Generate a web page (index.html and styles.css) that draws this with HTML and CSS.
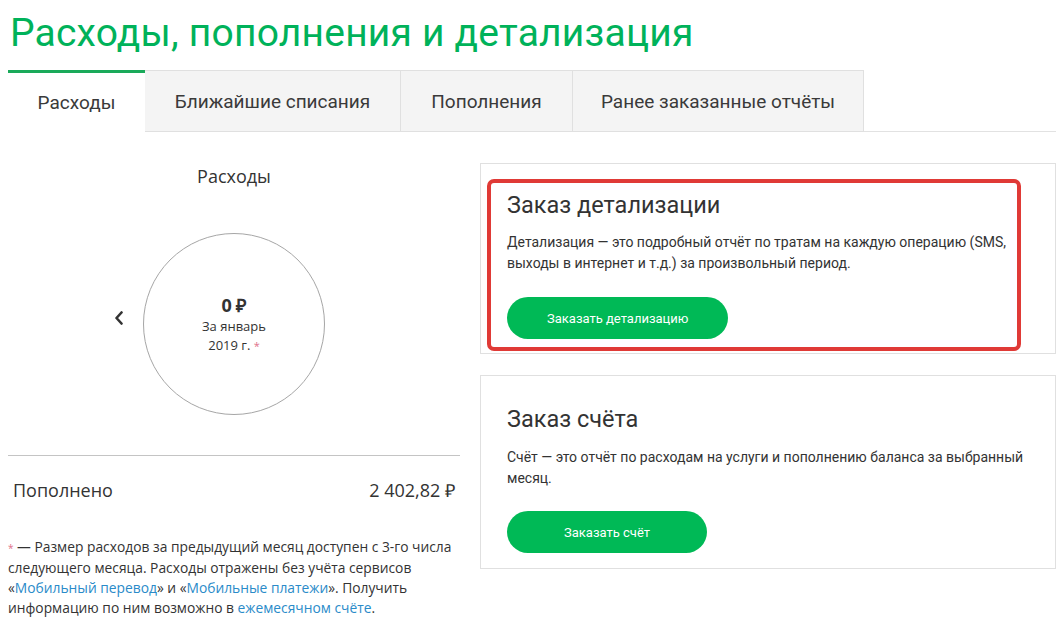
FILE: index.html
```html
<!DOCTYPE html>
<html lang="ru">
<head>
<meta charset="utf-8">
<title>Расходы, пополнения и детализация</title>
<link rel="stylesheet" href="styles.css">
</head>
<body>
<div class="page">
  <h1 class="title">Расходы, пополнения и детализация</h1>
  <div class="tabs">
    <div class="tab tab-active">Расходы</div>
    <div class="tab">Ближайшие списания</div>
    <div class="tab">Пополнения</div>
    <div class="tab">Ранее заказанные отчёты</div>
  </div>
  <div class="content">
    <div class="left">
      <div class="left-title">Расходы</div>
      <div class="chart">
        <div class="chev-cell">
          <svg class="chev" width="10" height="14" viewBox="0 0 10 14"><path d="M7.5 1.5 L2.5 7 L7.5 12.5" fill="none" stroke="#333" stroke-width="2.6" stroke-linecap="round" stroke-linejoin="round"/></svg>
        </div>
        <div class="circle">
          <div class="sum">0 ₽</div>
          <div class="period">За январь</div>
          <div class="period">2019 г. <span class="star">*</span></div>
        </div>
        <div></div>
      </div>
      <div class="sep"></div>
      <div class="paid-row">
        <span>Пополнено</span>
        <span>2 402,82 ₽</span>
      </div>
      <p class="note"><span class="star">*</span> — Размер расходов за предыдущий месяц доступен с 3-го числа следующего месяца. Расходы отражены без учёта сервисов «<a href="#">Мобильный перевод</a>» и «<a href="#">Мобильные платежи</a>». Получить информацию по ним возможно в <a href="#">ежемесячном счёте</a>.</p>
    </div>
    <div class="right">
      <div class="card">
        <h2 class="card-title">Заказ детализации</h2>
        <p class="card-text">Детализация — это подробный отчёт по тратам на каждую операцию (SMS, выходы в интернет и т.д.) за произвольный период.</p>
        <button class="btn">Заказать детализацию</button>
        <div class="highlight"></div>
      </div>
      <div class="card card-second">
        <h2 class="card-title">Заказ счёта</h2>
        <p class="card-text">Счёт — это отчёт по расходам на услуги и пополнению баланса за выбранный месяц.</p>
        <button class="btn">Заказать счёт</button>
      </div>
    </div>
  </div>
</div>
</body>
</html>
```
FILE: styles.css
```css
* { box-sizing: border-box; }
body {
  margin: 8px;
  font-family: Roboto, "Liberation Sans", sans-serif;
  color: #333;
  background: #fff;
}
.page { width: 1048px; }
.title {
  margin: 0 0 12px;
  padding-left: 2px;
  font-family: Roboto, sans-serif;
  font-weight: 400;
  font-size: 39px;
  line-height: 50px;
  color: #00b25a;
  letter-spacing: 0.2px;
}
.tabs {
  display: flex;
  border-bottom: 1px solid #e2e2e2;
  height: 62px;
}
.tab {
  height: 62px;
  display: flex;
  align-items: center;
  justify-content: center;
  padding: 0;
  background: #f4f4f4;
  border: 1px solid #e0e0e0;
  border-left: none;
  font-size: 19px;
  color: #3a3a3a;
}
.tab-active {
  background: #fff;
  border: none;
  border-top: 3px solid #1aaa5a;
  width: 137px;
  height: 62px;
}
.tab:nth-child(2) { width: 256px; }
.tab:nth-child(3) { width: 172px; }
.tab:nth-child(4) { width: 291px; }
.content {
  display: flex;
  gap: 20px;
}
.left {
  width: 452px;
  flex: none;
}
.left-title {
  margin-top: 32px;
  font-family: "Open Sans", sans-serif;
  font-size: 18px;
  line-height: 24px;
  text-align: center;
  color: #333;
}
.chart {
  margin-top: 45px;
  display: grid;
  grid-template-columns: 1fr auto 1fr;
  align-items: center;
}
.chev-cell {
  display: flex;
  justify-content: flex-end;
  padding-right: 19px;
  padding-bottom: 12px;
}
.circle {
  width: 182px;
  height: 182px;
  border: 1px solid #a6a6a6;
  border-radius: 50%;
  display: flex;
  flex-direction: column;
  align-items: center;
  justify-content: center;
  font-family: "Open Sans", sans-serif;
}
.sum {
  font-weight: 700;
  font-size: 18px;
  line-height: 24px;
  color: #333;
}
.period {
  font-size: 13px;
  line-height: 19px;
  color: #333;
}
.star { color: #e0708a; font-size: 11px; vertical-align: top; }
.sep {
  margin-top: 40px;
  height: 1px;
  background: #c4c4c4;
}
.paid-row {
  margin-top: 22px;
  display: flex;
  justify-content: space-between;
  padding: 0 5px;
  font-family: "Open Sans", sans-serif;
  font-size: 18px;
  line-height: 24px;
  color: #333;
}
.note {
  margin: 35px 0 0;
  font-family: "Open Sans", sans-serif;
  font-size: 13.8px;
  line-height: 20px;
  color: #333;
}
.note .star { font-size: 10px; vertical-align: baseline; }
.note a { color: #2a8bc9; text-decoration: none; }
.right {
  width: 576px;
  flex: none;
  padding-top: 31px;
  display: flex;
  flex-direction: column;
  gap: 20px;
}
.card {
  position: relative;
  border: 1px solid #e0e0e0;
  padding: 27px 26px 14px;
}
.card-second { margin-top: 1px; padding-top: 29px; padding-bottom: 15px; }
.card-title {
  margin: 0;
  font-weight: 400;
  font-size: 23.5px;
  line-height: 28px;
  color: #333;
}
.card-text {
  margin: 13px 0 0;
  font-size: 14px;
  line-height: 21px;
  color: #333;
}
.card-second .card-text { margin-top: 14px; line-height: 20.5px; }
.btn {
  margin-top: 23px;
  height: 42px;
  min-width: 200px;
  padding: 0 40px;
  border: none;
  border-radius: 21px;
  background: #00b956;
  color: #fff;
  font-family: Roboto, sans-serif;
  font-size: 13px;
  display: block;
}
.highlight {
  position: absolute;
  left: 6px;
  top: 15px;
  width: 534px;
  height: 172px;
  border: 4px solid #e03a36;
  border-radius: 7px;
  pointer-events: none;
}
```
